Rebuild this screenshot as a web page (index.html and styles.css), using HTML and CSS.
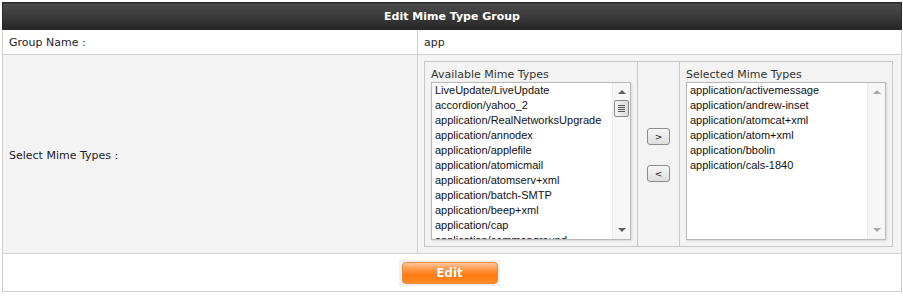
FILE: index.html
```html
<!DOCTYPE html>
<html>
<head>
<meta charset="utf-8">
<link rel="stylesheet" href="styles.css">
</head>
<body>
<div class="wrap">
<table class="main">
  <tr><th colspan="2" class="head">Edit Mime Type Group</th></tr>
  <tr class="r1">
    <td class="lbl">Group Name :</td>
    <td class="val">app</td>
  </tr>
  <tr class="r2">
    <td class="lbl">Select Mime Types :</td>
    <td class="val2">
      <table class="inner">
        <tr>
          <td class="col">
            <div class="cap">Available Mime Types</div>
            <div class="lb">
              <div class="items">
                <div>LiveUpdate/LiveUpdate</div>
                <div>accordion/yahoo_2</div>
                <div>application/RealNetworksUpgrade</div>
                <div>application/annodex</div>
                <div>application/applefile</div>
                <div>application/atomicmail</div>
                <div>application/atomserv+xml</div>
                <div>application/batch-SMTP</div>
                <div>application/beep+xml</div>
                <div>application/cap</div>
                <div>application/commonground</div>
              </div>
              <div class="sb">
                <span class="up"></span>
                <span class="thumb"><i></i><i></i><i></i><i></i></span>
                <span class="dn"></span>
              </div>
            </div>
          </td>
          <td class="mid">
            <div class="btns">
              <button class="mv">&gt;</button>
              <button class="mv">&lt;</button>
            </div>
          </td>
          <td class="col">
            <div class="cap">Selected Mime Types</div>
            <div class="lb">
              <div class="items">
                <div>application/activemessage</div>
                <div>application/andrew-inset</div>
                <div>application/atomcat+xml</div>
                <div>application/atom+xml</div>
                <div>application/bbolin</div>
                <div>application/cals-1840</div>
              </div>
              <div class="sb dis">
                <span class="up"></span>
                <span class="dn"></span>
              </div>
            </div>
          </td>
        </tr>
      </table>
    </td>
  </tr>
  <tr class="r3">
    <td colspan="2" class="foot"><span class="ebg"><button class="edit">Edit</button></span></td>
  </tr>
</table>
</div>
</body>
</html>
```
FILE: styles.css
```css
html, body { margin: 0; padding: 0; background: #fff; }
.wrap { padding: 2px 2px 0 2px; }
.main {
  width: 900px;
  border-collapse: collapse;
  font-family: "DejaVu Sans", Verdana, sans-serif;
  font-size: 11px;
  color: #1c1c28;
  border: 1px solid #cfcfcf;
}
.head {
  height: 26px;
  padding: 0;
  background: linear-gradient(#4c4c4c, #3a3a3a 50%, #262626);
  color: #fff;
  font-weight: bold;
  font-size: 11px;
  text-align: center;
  border: 1px solid #2a2a2a;
}
.main td { border: 1px solid #cfcfcf; padding: 0; }
.r1 td { height: 24px; background: #fff; }
.lbl { width: 408px; padding-left: 6px !important; }
.val { padding-left: 6px !important; }
.r2 td.lbl, .r2 td.val2 { background: #f3f3f3; }
.r2 td.lbl { padding-top: 3px !important; }
.r2 td.val2 { padding: 6px 7px 6px 6px !important; vertical-align: top; }
.inner {
  width: 468px;
  table-layout: fixed;
  border-collapse: collapse;
  border: 1px solid #c8c8c8;
}
.inner td { border: 1px solid #c8c8c8 !important; vertical-align: top; }
.col { width: 200px; padding: 6px 6px 6px 6px !important; }
.mid { width: 41px; }
.cap { color: #333; height: 14px; line-height: 14px; white-space: nowrap; }
.lb {
  display: flex;
  height: 156px;
  background: #fff;
  border: 1px solid #b9b9b9;
  box-shadow: 1px 1px 2px rgba(0,0,0,0.12);
  overflow: hidden;
}
.items {
  flex: 1;
  font-family: "Liberation Sans", Arial, sans-serif;
  font-size: 11px;
  color: #111;
  line-height: 15px;
  padding: 0 0 0 3px;
  overflow: hidden;
  white-space: nowrap;
}
.sb {
  flex: none;
  width: 17px;
  background: #f6f6f6;
  border-left: 1px solid #ececec;
  position: relative;
}
.up, .dn {
  position: absolute;
  left: 5px;
  width: 0; height: 0;
  border-left: 4px solid transparent;
  border-right: 4px solid transparent;
}
.up { top: 7px; border-bottom: 4px solid #606060; }
.dn { bottom: 7px; border-top: 4px solid #606060; }
.dis .up { border-bottom-color: #a8a8a8; }
.dis .dn { border-top-color: #a8a8a8; }
.thumb {
  position: absolute;
  left: 1px; top: 17px;
  width: 13px; height: 15px;
  border: 1px solid #8a8a8a;
  border-radius: 2px;
  background: linear-gradient(90deg, #f4f4f4, #dcdcdc);
  display: flex; flex-direction: column; align-items: center; justify-content: center; gap: 1px;
}
.thumb i { display: block; width: 7px; height: 1px; background: #555; }
.btns {
  display: flex; flex-direction: column; align-items: center; gap: 20px;
  padding-top: 66px;
}
.mv {
  width: 23px; height: 17px;
  padding: 0; margin: 0;
  border: 1px solid #8c8c8c;
  border-radius: 3px;
  background: linear-gradient(#f6f6f6, #dedede);
  font-family: "DejaVu Sans", sans-serif;
  font-size: 9px;
  color: #222;
  line-height: 14px;
}
.r3 td { height: 37px; background: #fff; text-align: center; vertical-align: middle; }
.foot { padding-left: 0 !important; }
.ebg { display: inline-block; background: #efefef; padding: 2px 2px 2px 3px; margin-left: -6px; margin-top: 1px; }
.edit {
  display: block;
  width: 96px; height: 22px;
  margin: 0; padding: 0;
  border: 1px solid #e7893b;
  border-radius: 4px;
  background: linear-gradient(#ffc7a0 0%, #ff9a4a 30%, #ff7a10 60%, #ff8a25 100%);
  color: #fff;
  font-family: "DejaVu Sans", Verdana, sans-serif;
  font-weight: bold;
  font-size: 12px;
  text-shadow: 0 0 1px rgba(120,40,0,0.4);
}
```
